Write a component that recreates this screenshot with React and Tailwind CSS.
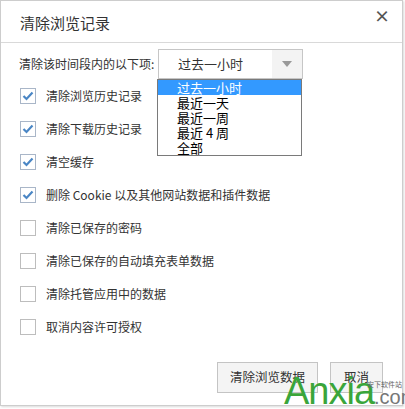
import React from "react";

const items = [
  { label: "清除浏览历史记录", checked: true },
  { label: "清除下载历史记录", checked: true },
  { label: "清空缓存", checked: true },
  { label: "删除 Cookie 以及其他网站数据和插件数据", checked: true },
  { label: "清除已保存的密码", checked: false },
  { label: "清除已保存的自动填充表单数据", checked: false },
  { label: "清除托管应用中的数据", checked: false },
  { label: "取消内容许可授权", checked: false },
];

const options = ["过去一小时", "最近一天", "最近一周", "最近 4 周", "全部"];

function Box({ checked }) {
  return (
    <div
      className={
        "w-[16px] h-[16px] border bg-white flex items-center justify-center shrink-0 " +
        (checked ? "border-[#a9b6c8]" : "border-[#bdbdbd]")
      }
    >
      {checked && (
        <svg width="12" height="10" viewBox="0 0 12 10">
          <path d="M1.5 5 L4.5 8 L10.5 1.5" fill="none" stroke="#4a86c5" strokeWidth="2.2" />
        </svg>
      )}
    </div>
  );
}

export default function App() {
  return (
    <div
      className="relative w-[405px] h-[409px] bg-white overflow-hidden text-[#333]"
      style={{ fontFamily: '"Noto Sans CJK SC", "Liberation Sans", sans-serif' }}
    >
      <div className="w-[403px] h-[406px] border border-[#cdcdcd] shadow-[1px_1px_2px_rgba(0,0,0,0.15)] bg-white flex flex-col">
        <div className="h-[42px] shrink-0 border-b border-[#d9d9d9] flex justify-between pl-[19px] pr-[12px]">
          <div className="text-[15px] leading-none mt-[14px]">清除浏览记录</div>
          <div className="text-[16px] leading-none mt-[6px] text-[#555] font-bold">×</div>
        </div>
        <div className="flex flex-col pl-[18px] pt-[6px]">
          <div className="h-[30px] flex items-center text-[12px]">
            <span className="w-[139px] whitespace-nowrap">清除该时间段内的以下项:</span>
            <div className="w-[145px] h-[30px] border border-[#c6c6c6] flex items-center">
              <span className="pl-[19px] flex-1 text-[13px]">过去一小时</span>
              <div className="w-[30px] h-full bg-[#f3f3f3] flex items-center justify-center">
                <svg width="10" height="6" viewBox="0 0 10 6">
                  <path d="M0 0 L10 0 L5 6 Z" fill="#999" />
                </svg>
              </div>
            </div>
          </div>
          {items.map((it) => (
            <div key={it.label} className="h-[33px] flex items-center pl-[1px] text-[12px]">
              <Box checked={it.checked} />
              <span className="ml-[10px] whitespace-nowrap">{it.label}</span>
            </div>
          ))}
        </div>
        <div className="flex justify-end gap-[12px] pr-[19px] mt-[19px]">
          <div className="w-[101px] h-[31px] border border-[#c4c4c4] bg-[#f4f4f4] flex items-center justify-center text-[12.5px]">
            清除浏览数据
          </div>
          <div className="w-[53px] h-[31px] border border-[#c4c4c4] bg-[#f4f4f4] flex items-center justify-center text-[12.5px]">
            取消
          </div>
        </div>
      </div>

      <div className="absolute left-[157px] top-[79px] w-[145px] border border-[#7a7a7a] bg-white text-[13px] leading-[15px]">
        {options.map((o, i) => (
          <div
            key={o}
            className={"h-[15px] pl-[19px] " + (i === 0 ? "bg-[#3399ff] text-white" : "text-black")}
          >
            {o}
          </div>
        ))}
      </div>

      <div className="absolute left-[284px] top-[372px] flex items-end leading-none">
        <span
          className="text-[38px] text-[#3aa53a] tracking-[-1px]"
          style={{ fontFamily: '"Liberation Sans", sans-serif' }}
        >
          Anxia
        </span>
        <span
          className="text-[20px] text-[#777] mb-[3px]"
          style={{ fontFamily: '"Liberation Sans", sans-serif' }}
        >
          .com
        </span>
      </div>
      <div className="absolute left-[367px] top-[381px] text-[7px] text-[#666] leading-none">安下软件站</div>
    </div>
  );
}
